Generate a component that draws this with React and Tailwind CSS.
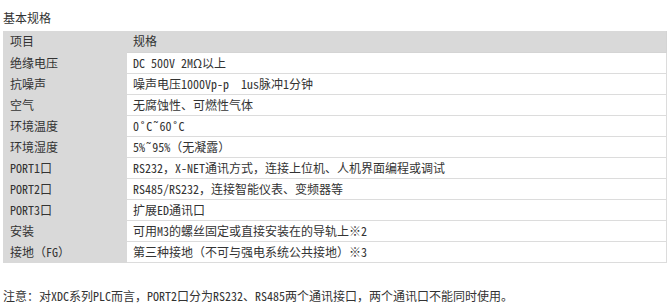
export default function App() {
  const rows = [
    ["绝缘电压", "DC 500V 2MΩ以上"],
    ["抗噪声", "噪声电压1000Vp-p  1us脉冲1分钟"],
    ["空气", "无腐蚀性、可燃性气体"],
    ["环境温度", "0˚C˜60˚C"],
    ["环境湿度", "5%˜95%（无凝露）"],
    ["PORT1口", "RS232，X-NET通讯方式，连接上位机、人机界面编程或调试"],
    ["PORT2口", "RS485/RS232，连接智能仪表、变频器等"],
    ["PORT3口", "扩展ED通讯口"],
    ["安装", "可用M3的螺丝固定或直接安装在的导轨上※2"],
    ["接地（FG）", "第三种接地（不可与强电系统公共接地）※3"],
  ];
  const font = {
    fontFamily:
      '"Noto Sans Mono CJK SC", "Noto Sans CJK SC", "Liberation Mono", monospace',
  };
  return (
    <div
      className="w-[671px] h-[306px] bg-white text-[12px] text-[#333] pl-[3px] whitespace-pre"
      style={font}
    >
      <div className="h-[31px] pt-[11px] leading-[14px]">基本规格</div>
      <table className="w-[664px] border-collapse">
        <tbody>
          <tr className="h-[21px] bg-[#d9d9d9]">
            <td className="w-[124px] pl-[7px] p-0 leading-[14px] border-b border-[#d9d9d9]">项目</td>
            <td className="pl-[6px] leading-[14px] border-b border-r border-[#d4d4d4]">规格</td>
          </tr>
          {rows.map(([a, b]) => (
            <tr key={a} className="h-[21px]">
              <td className="w-[124px] pl-[7px] bg-[#d9d9d9] leading-[14px] border-b border-[#d9d9d9]">
                {a}
              </td>
              <td className="pl-[6px] leading-[14px] border-b border-r border-[#dcdcdc]">{b}</td>
            </tr>
          ))}
        </tbody>
      </table>
      <div className="mt-[26px] leading-[14px]">
        注意：对XDC系列PLC而言，PORT2口分为RS232、RS485两个通讯接口，两个通讯口不能同时使用。
      </div>
    </div>
  );
}
